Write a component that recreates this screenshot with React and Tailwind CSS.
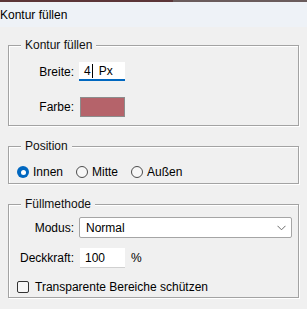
import React from 'react';

const font = { fontFamily: '"Liberation Sans", Arial, sans-serif' };

const Group = ({ title, className = '', children }) => (
  <div className={`relative mx-[8px] border border-[#a3a3a3] shadow-[inset_1px_1px_0_#fff,1px_1px_0_#fff] ${className}`}>
    <span className="absolute left-[12px] top-[-8px] bg-[#f0f0f0] px-[4px] text-[12px] leading-[14px] text-[#111]">
      {title}
    </span>
    {children}
  </div>
);

const Radio = ({ checked, label }) => (
  <label className="flex items-center gap-[4px]">
    {checked ? (
      <span className="flex h-[12px] w-[12px] items-center justify-center rounded-full bg-[#0067c0]">
        <span className="h-[5px] w-[5px] rounded-full bg-white" />
      </span>
    ) : (
      <span className="h-[12px] w-[12px] rounded-full border border-[#4d4d4d] bg-[#f7f7f7]" />
    )}
    <span>{label}</span>
  </label>
);

export default function App() {
  return (
    <div className="h-[309px] w-[307px] overflow-hidden bg-[#f0f0f0] text-[12px] text-black" style={font}>
      {/* top strip from window behind */}
      <div className="flex h-[2px]">
        <div className="w-[173px] bg-[#5b3538]" />
        <div className="flex-1 bg-[#6a5c5c]" />
      </div>

      {/* Title bar */}
      <div className="flex h-[25px] items-center bg-[#eef2f7] pl-[0px] text-[12px]">Kontur füllen</div>

      <div className="pt-[18px]">
        {/* Kontur füllen */}
        <Group title="Kontur füllen" className="pt-[16px] pb-[8px]">
          <div className="flex items-center">
            <span className="w-[65px] text-right">Breite:</span>
            <div className="ml-[5px] flex h-[19px] w-[46px] items-center border-b-2 border-[#0067c0] bg-white pl-[5px]">
              <span>4</span>
              <span className="ml-[1px] h-[14px] w-[1px] bg-black" />
              <span className="ml-[6px]">Px</span>
            </div>
          </div>
          <div className="mt-[16px] flex items-center">
            <span className="w-[65px] text-right">Farbe:</span>
            <div className="ml-[6px] h-[20px] w-[45px] border border-[#8c8c8c] bg-[#b5636a]" />
          </div>
        </Group>

        {/* Position */}
        <Group title="Position" className="mt-[20px] pt-[19px] pb-[5px] pl-[8px]">
          <div className="flex h-[12px] items-center gap-[13px]">
            <Radio checked label="Innen" />
            <Radio label="Mitte" />
            <Radio label="Außen" />
          </div>
        </Group>

        {/* Füllmethode */}
        <Group title="Füllmethode" className="mt-[20px] pt-[12px] pb-[4px]">
          <div className="flex items-center">
            <span className="w-[65px] text-right">Modus:</span>
            <div className="ml-[5px] mr-[6px] flex h-[21px] flex-1 items-center justify-between rounded-[2px] border border-[#a5a5a5] bg-white pl-[6px] pr-[5px]">
              <span>Normal</span>
              <svg width="9" height="6" viewBox="0 0 9 6" fill="none">
                <path d="M0.5 0.8 L4.5 4.8 L8.5 0.8" stroke="#6b6b6b" strokeWidth="1" />
              </svg>
            </div>
          </div>
          <div className="mt-[10px] flex items-center">
            <span className="w-[65px] text-right">Deckkraft:</span>
            <div className="ml-[6px] flex h-[20px] w-[45px] items-center border-b border-[#d0d0d0] bg-white pl-[5px]">100</div>
            <span className="ml-[6px]">%</span>
          </div>
          <label className="mt-[12px] flex h-[13px] items-center gap-[6px] pl-[8px]">
            <span className="h-[12px] w-[12px] rounded-[2px] border border-[#333] bg-[#f7f7f7]" />
            <span>Transparente Bereiche schützen</span>
          </label>
        </Group>
      </div>
    </div>
  );
}
